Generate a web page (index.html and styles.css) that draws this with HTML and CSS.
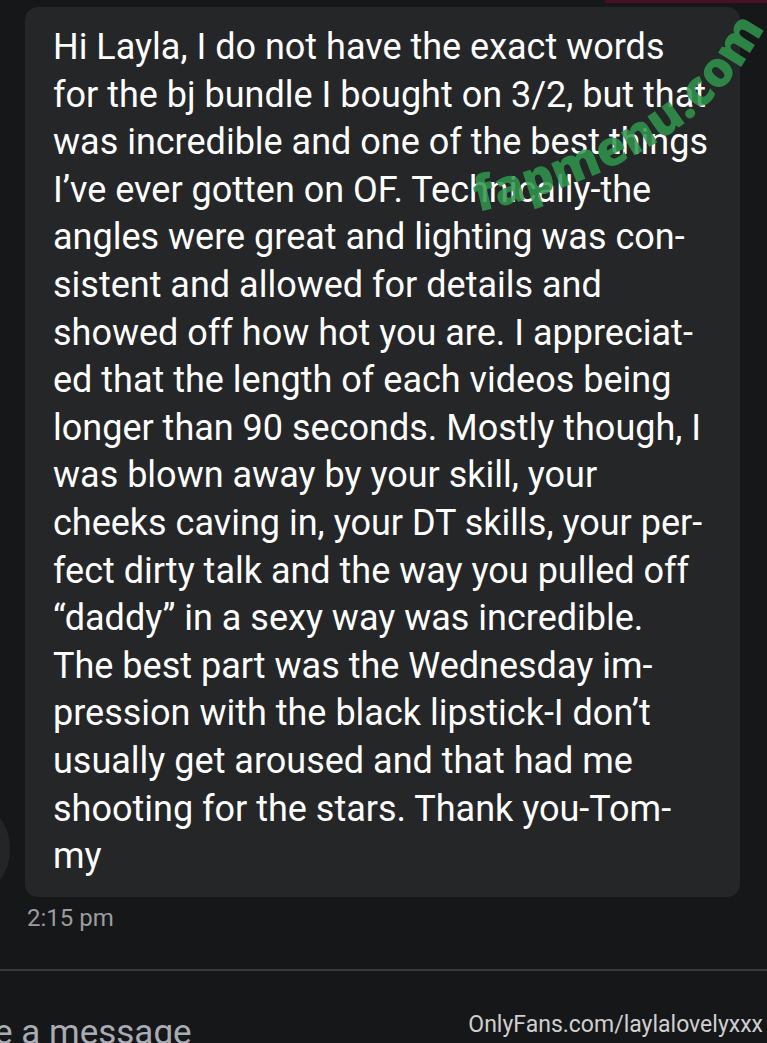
FILE: index.html
```html
<!DOCTYPE html>
<html>
<head>
<meta charset="utf-8">
<link rel="stylesheet" href="styles.css">
</head>
<body>
<div class="screen">
  <div class="topbar"></div>
  <div class="chat">
    <div class="avatar"></div>
    <div class="msg">
      <div class="bubble">
        <div class="line">Hi Layla, I do not have the exact words</div>
        <div class="line">for the bj bundle I bought on 3/2, but that</div>
        <div class="line">was incredible and one of the best things</div>
        <div class="line">I’ve ever gotten on OF. Technically-the</div>
        <div class="line">angles were great and lighting was con-</div>
        <div class="line">sistent and allowed for details and</div>
        <div class="line">showed off how hot you are. I appreciat-</div>
        <div class="line">ed that the length of each videos being</div>
        <div class="line">longer than 90 seconds. Mostly though, I</div>
        <div class="line">was blown away by your skill, your</div>
        <div class="line">cheeks caving in, your DT skills, your per-</div>
        <div class="line">fect dirty talk and the way you pulled off</div>
        <div class="line">“daddy” in a sexy way was incredible.</div>
        <div class="line">The best part was the Wednesday im-</div>
        <div class="line">pression with the black lipstick-I don’t</div>
        <div class="line">usually get aroused and that had me</div>
        <div class="line">shooting for the stars. Thank you-Tom-</div>
        <div class="line">my</div>
      </div>
      <div class="time">2:15 pm</div>
    </div>
  </div>
  <div class="composer">
    <div class="placeholder">e a message</div>
    <div class="credit">OnlyFans.com/laylalovelyxxx</div>
  </div>
  <svg class="watermark" width="767" height="260" viewBox="0 0 767 260">
    <path id="wmPath" d="M 478 212 Q 702 160 766 24" fill="none"/>
    <text class="wm-text"><textPath href="#wmPath" textLength="352" lengthAdjust="spacing">fapmenu.com</textPath></text>
  </svg>
</div>
</body>
</html>
```
FILE: styles.css
```css
* { box-sizing: border-box; }
html, body {
  margin: 0;
  padding: 0;
  background: #161719;
}
.screen {
  position: relative;
  width: 767px;
  height: 1043px;
  overflow: hidden;
  background: #161719;
  font-family: Roboto, "Noto Sans", sans-serif;
}
.topbar {
  position: absolute;
  top: 0;
  left: 605px;
  width: 162px;
  height: 3px;
  background: #4a0f25;
}
.chat {
  display: flex;
  padding: 7px 27px 0 25px;
  position: relative;
}
.avatar {
  position: absolute;
  left: -36px;
  top: 812px;
  width: 46px;
  height: 74px;
  border-radius: 50%;
  background: #242527;
}
.msg {
  flex: 1;
  display: flex;
  flex-direction: column;
}
.bubble {
  background: #252628;
  border-radius: 13px;
  padding: 17px 10px 16px 28px;
  height: 890px;
  color: #ffffff;
  font-size: 36px;
  line-height: 47.6px;
}
.line {
  white-space: nowrap;
}
.time {
  margin-top: 6px;
  padding-left: 2px;
  color: #9b9c9e;
  font-size: 24px;
  line-height: 30px;
}
.composer {
  position: absolute;
  left: 0;
  right: 0;
  top: 969px;
  bottom: 0;
  border-top: 2px solid #38393b;
  background: #161719;
}
.placeholder {
  position: absolute;
  left: -6px;
  top: 40px;
  color: #a9adb3;
  font-size: 35px;
  line-height: 44px;
}
.credit {
  position: absolute;
  right: 4px;
  top: 40px;
  color: #cfcfcf;
  font-size: 23px;
  line-height: 28px;
}
.watermark {
  position: absolute;
  left: 0;
  top: 0;
}
.wm-text {
  fill: rgba(46, 150, 76, 0.86);
  font-family: "Open Sans", "DejaVu Sans", sans-serif;
  font-weight: 800;
  font-size: 49px;
}
```
